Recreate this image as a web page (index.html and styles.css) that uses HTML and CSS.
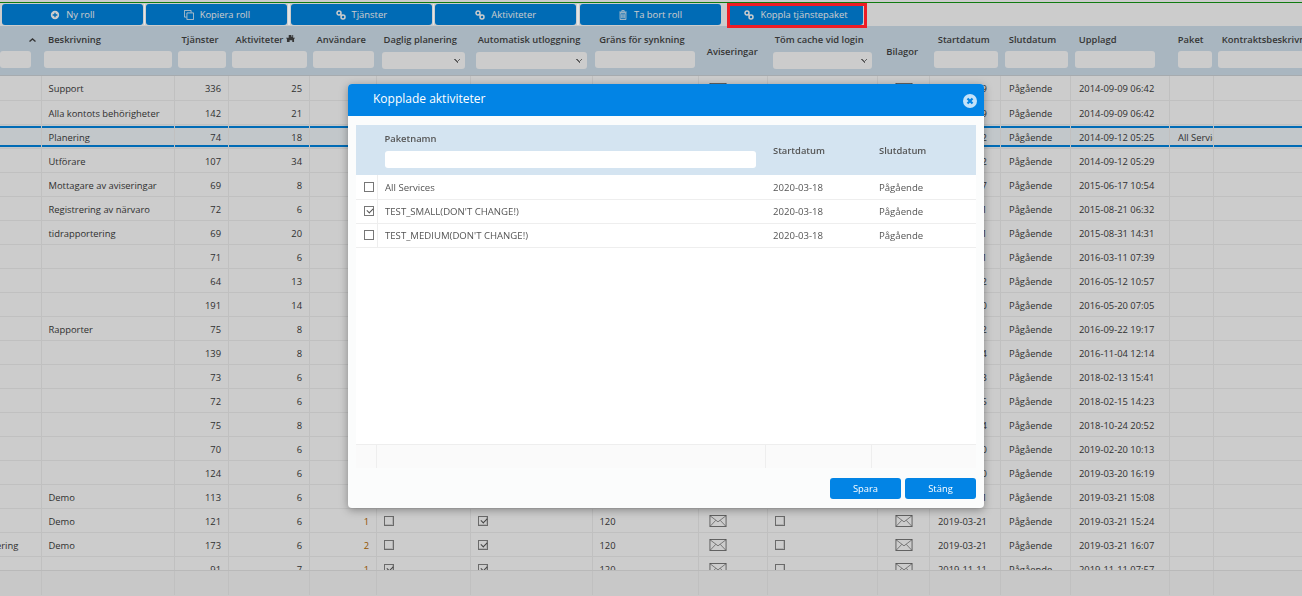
FILE: index.html
```html
<!DOCTYPE html>
<html lang="sv">
<head>
    <meta charset="UTF-8">
    <title>Roller</title>
    <link rel="stylesheet" href="styles.css">
</head>
<body>
    <svg class="defs" width="0" height="0">
        <symbol id="i-link" viewBox="0 0 12 12">
            <circle cx="3.6" cy="3.6" r="2.4" fill="none" stroke="currentColor" stroke-width="1.8"/>
            <circle cx="8.4" cy="8.4" r="2.4" fill="none" stroke="currentColor" stroke-width="1.8"/>
            <path d="M4.6 4.6l2.800 2.800" stroke="currentColor" stroke-width="1.800"/>
        </symbol>
        <symbol id="i-mail" viewBox="0 0 20 14">
            <rect x=".6" y=".6" width="18.8" height="12.8" fill="none" stroke="currentColor"/>
            <path d="M.6.8L10 8l9.4-7.2M.8 13.2l6.6-7M19.2 13.2l-6.6-7" fill="none" stroke="currentColor" stroke-width=".8"/>
        </symbol>
    </svg>

    <div class="toolbar">
        <button class="tool"><svg class="ico" viewBox="0 0 12 12"><circle cx="6" cy="6" r="5" fill="currentColor"/><path d="M6 3.2v5.600M3.2 6h5.600" stroke="#0086e3" stroke-width="1.6"/></svg>Ny roll</button>
        <span class="grip"></span>
        <button class="tool"><svg class="ico" viewBox="0 0 12 12"><path d="M3.5 3.5h8v8h-8zM3 8.5H.5v-8h8V3" fill="none" stroke="currentColor"/></svg>Kopiera roll</button>
        <span class="grip"></span>
        <button class="tool"><svg class="ico"><use href="#i-link"/></svg>Tjänster</button>
        <span class="grip"></span>
        <button class="tool"><svg class="ico"><use href="#i-link"/></svg>Aktiviteter</button>
        <span class="grip"></span>
        <button class="tool"><svg class="ico" viewBox="0 0 12 12"><path d="M4.5 2V.8h3V2M1.500 2.500h9M2.500 3.500h7v8h-7zM4.500 5v5M6 5v5M7.500 5v5" fill="none" stroke="currentColor"/></svg>Ta bort roll</button>
        <span class="grip"></span>
        <button class="tool last"><svg class="ico"><use href="#i-link"/></svg>Koppla tjänstepaket</button>
    </div>

    <div class="grid-head">
        <table class="grid">
            <colgroup><col class="c1"><col class="c2"><col class="c3"><col class="c4"><col class="c5"><col class="c6"><col class="c7"><col class="c8"><col class="c9"><col class="c10"><col class="c11"><col class="c12"><col class="c13"><col class="c14"><col class="c15"><col class="c16"></colgroup>
            <tr>
                <th><span class="sort"><svg viewBox="0 0 7 4" width="7" height="4"><path d="M.5 3.500l3-2.500 3 2.500" fill="none" stroke="currentColor" stroke-width="1.400"/></svg></span><div class="filter flush"></div></th>
                <th>Beskrivning<div class="filter"></div></th>
                <th>Tjänster<div class="filter"></div></th>
                <th>Aktiviteter <svg class="tree" viewBox="0 0 10 9"><path d="M3 0h3v2h1V0h1v3h2v1H9v4H7V6H4v2H1V4H0V3h3z" fill="currentColor"/></svg><div class="filter"></div></th>
                <th>Användare<div class="filter"></div></th>
                <th>Daglig planering<div class="filter pick"></div></th>
                <th>Automatisk utloggning<div class="filter pick"></div></th>
                <th>Gräns för synkning<div class="filter"></div></th>
                <th class="mid">Aviseringar</th>
                <th>Töm cache vid login<div class="filter pick"></div></th>
                <th class="mid">Bilagor</th>
                <th>Startdatum<div class="filter"></div></th>
                <th>Slutdatum<div class="filter"></div></th>
                <th>Upplagd<div class="filter upplagd"></div></th>
                <th>Paket<div class="filter paket"></div></th>
                <th>Kontraktsbeskrivning<div class="filter"></div></th>
            </tr>
        </table>
    </div>

    <div class="grid-body">
        <table class="grid" id="rows">
            <colgroup><col class="c1"><col class="c2"><col class="c3"><col class="c4"><col class="c5"><col class="c6"><col class="c7"><col class="c8"><col class="c9"><col class="c10"><col class="c11"><col class="c12"><col class="c13"><col class="c14"><col class="c15"><col class="c16"></colgroup>
        </table>
    </div>

    <div class="grid-foot">
        <table class="grid">
            <colgroup><col class="c1"><col class="c2"><col class="c3"><col class="c4"><col class="c5"><col class="c6"><col class="c7"><col class="c8"><col class="c9"><col class="c10"><col class="c11"><col class="c12"><col class="c13"><col class="c14"><col class="c15"><col class="c16"></colgroup>
            <tr><td></td><td></td><td></td><td></td><td></td><td></td><td></td><td></td><td></td><td></td><td></td><td></td><td></td><td></td><td></td><td></td></tr>
        </table>
    </div>

    <div class="overlay"></div>
    <div class="marker"></div>

    <div class="modal">
        <div class="modal-title">
            <span class="modal-name">Kopplade aktiviteter</span>
            <svg class="close" viewBox="0 0 14 14"><circle cx="7" cy="7" r="7" fill="#c4e2f9"/><path d="M4.500 4.500l5 5M9.500 4.500l-5 5" stroke="#0284e5" stroke-width="2.200"/></svg>
        </div>
        <div class="modal-body">
            <table class="pick-table">
                <colgroup><col class="p1"><col class="p2"><col class="p3"><col class="p4"></colgroup>
                <tr class="pick-head">
                    <th></th>
                    <th>Paketnamn<div class="filter white"></div></th>
                    <th class="mid">Startdatum</th>
                    <th class="mid">Slutdatum</th>
                </tr>
                <tr><td class="box"><span class="check"></span></td><td>All Services</td><td>2020-03-18</td><td>Pågående</td></tr>
                <tr><td class="box"><span class="check on"></span></td><td>TEST_SMALL(DON'T CHANGE!)</td><td>2020-03-18</td><td>Pågående</td></tr>
                <tr><td class="box"><span class="check"></span></td><td>TEST_MEDIUM(DON'T CHANGE!)</td><td>2020-03-18</td><td>Pågående</td></tr>
            </table>
            <div class="pick-space"></div>
            <div class="pick-foot"><span class="p1"></span><span class="p2"></span><span class="p3"></span><span class="p4"></span></div>
        </div>
        <div class="modal-actions">
            <button class="action">Spara</button>
            <button class="action">Stäng</button>
        </div>
    </div>

    <script src="rows.js"></script>
</body>
</html>
```

FILE: styles.css
```css
* {
    box-sizing: border-box;
}
html, body {
    height: 100%;
}
body {
    margin: 0;
    padding-top: 2px;
    overflow: hidden;
    background-color: #fff;
    color: #3c3c3c;
    font-family: "Open Sans", sans-serif;
    font-size: 9.4px;
}
.defs {
    display: block;
    height: 0;
}
.toolbar {
    display: flex;
    gap: 1px;
    height: 24px;
    padding: 1px 0 0 2px;
    border-top: 1px solid #149a14;
}
.tool {
    flex: none;
    width: 141px;
    height: 21px;
    border: none;
    border-radius: 3px;
    background-color: #0086e3;
    color: #fff;
    font: inherit;
    display: flex;
    align-items: center;
    justify-content: center;
    gap: 6px;
    padding: 0;
}
.tool.last {
    width: 135px;
    margin-left: 4.5px;
}
.tool .ico {
    width: 10px;
    height: 10px;
}
.grip {
    flex: none;
    width: 1.4px;
    height: 21px;
    background-color: #e4e4e4;
    z-index: 2;
}
.grip:last-of-type {
    visibility: hidden;
}
table.grid {
    table-layout: fixed;
    border-collapse: collapse;
    width: 1329px;
}
.c1 { width: 41px; }
.c2 { width: 133.5px; }
.c3 { width: 54px; }
.c4 { width: 81px; }
.c5 { width: 67px; }
.c6 { width: 94px; }
.c7 { width: 121.5px; }
.c8 { width: 106px; }
.c9 { width: 69.5px; }
.c10 { width: 110px; }
.c11 { width: 52px; }
.c12 { width: 71px; }
.c13 { width: 70px; }
.c14 { width: 99px; }
.c15 { width: 44px; }
.c16 { width: 115px; }
.grid-head {
    height: 50px;
    background-color: #d4e4f1;
    overflow: hidden;
    border-bottom: 1px solid #d0d6db;
}
.grid-head th {
    height: 50px;
    padding: 7px 7px 0;
    text-align: left;
    vertical-align: top;
    font-weight: 600;
    white-space: nowrap;
    overflow: hidden;
    color: #444;
}
.grid-head th.mid {
    vertical-align: middle;
    padding: 0 0 0 8.5px;
}
.grid-head th:nth-child(n+12) {
    padding-left: 8px;
}
.grid-head .sort {
    display: block;
    height: 13px;
    text-align: right;
    line-height: 11px;
    margin-right: -2px;
}
.tree {
    width: 9px;
    height: 8px;
}
.filter {
    height: 17px;
    margin: 5px -4px 0;
    border-radius: 3px;
    background-color: #fff;
}
.filter.flush {
    margin-left: -7px;
    margin-right: 3px;
}
.filter.upplagd {
    margin-right: 8px;
}
.filter.paket {
    margin-left: 0;
    margin-right: -5px;
}
.filter.pick {
    margin: 6px -1.5px 0;
    background-image: linear-gradient(45deg, transparent 50%, #777 50%, #777 64%, transparent 64%), linear-gradient(-45deg, transparent 50%, #777 50%, #777 64%, transparent 64%);
    background-size: 4px 4px;
    background-position: right 7px center, right 4px center;
    background-repeat: no-repeat;
}
.grid-body {
    height: 494px;
    overflow: hidden;
}
.grid-body td, .grid-foot td {
    height: 24px;
    padding: 2px 7px 0;
    border-right: 1px solid #f0f0f0;
    border-bottom: 1px solid #f0f0f0;
    white-space: nowrap;
    overflow: hidden;
}
.grid-body td:nth-child(n+12) {
    padding-left: 8px;
}
.grid-body td.num {
    text-align: right;
}
.grid-body td.users {
    color: #b86a00;
}
.grid-body td.scrolled {
    text-indent: -30px;
}
.grid-body tr.sel td {
    background-color: #f3f9fd;
    box-shadow: inset 0 1px #f3f9fd, inset 0 3px #0086e3, inset 0 -1px #f3f9fd, inset 0 -3px #0086e3;
}
.mail {
    display: block;
    width: 18px;
    height: 12px;
    margin: 0 0 0 3px;
    color: #666;
}
.mail.center {
    margin: 0 auto;
}
.check {
    display: block;
    width: 10px;
    height: 10px;
    border: 1px solid #858585;
    box-shadow: inset -1px -1px #ddd;
    position: relative;
}
.check.on::after {
    content: "";
    position: absolute;
    left: 1.5px;
    top: 0.5px;
    width: 5px;
    height: 3px;
    border-left: 1px solid #555;
    border-bottom: 1px solid #555;
    transform: rotate(-45deg);
}
.grid-foot {
    height: 26px;
    background-color: #fafafa;
    border-top: 1px solid #e8e8e8;
    overflow: hidden;
}
.grid-foot td {
    border-bottom: none;
}
.overlay {
    position: fixed;
    inset: 0;
    z-index: 1;
    background-color: rgba(0, 0, 0, 0.2);
}
.marker {
    position: absolute;
    left: 727px;
    top: 3px;
    z-index: 3;
    width: 140px;
    height: 25px;
    border: 3px solid #ee1c25;
}
.modal {
    position: absolute;
    left: 348px;
    top: 84px;
    z-index: 3;
    width: 636px;
    height: 424px;
    border-radius: 4px;
    background-color: #fbfcfc;
    box-shadow: 0 2px 8px rgba(0, 0, 0, 0.35);
    display: flex;
    flex-direction: column;
}
.modal-title {
    height: 32px;
    flex: none;
    border-radius: 4px 4px 0 0;
    background-color: #0284e5;
    color: #fff;
    font-size: 12px;
    display: flex;
    align-items: center;
    justify-content: space-between;
    padding: 0 7px 0 25px;
}
.modal-name {
    margin-top: -3px;
}
.close {
    width: 14px;
    height: 14px;
    margin-top: 2px;
}
.modal-body {
    flex: 1;
    margin: 9px 8px 0;
    background-color: #fff;
    display: flex;
    flex-direction: column;
}
.pick-table {
    table-layout: fixed;
    border-collapse: collapse;
    width: 620px;
}
.p1 { width: 21px; }
.p2 { width: 388.5px; }
.p3 { width: 106px; }
.p4 { width: 104.500px; }
.pick-head {
    background-color: #d4e4f1;
}
.pick-head th {
    height: 50px;
    padding: 7px 9.5px 0 7.5px;
    text-align: left;
    vertical-align: top;
    font-weight: 600;
    color: #555;
}
.pick-head th.mid {
    vertical-align: middle;
    padding-top: 0;
}
.filter.white {
    margin: 6px 0 0;
}
.pick-table td {
    height: 24px;
    padding: 1px 8px 0 7.5px;
    border-bottom: 1px solid #eee;
    color: #555;
    font-size: 9.6px;
}
.pick-table td.box {
    padding: 0 0 0 8px;
    border-right: 1px solid #eee;
}
.pick-table .check {
    border-color: #777;
    background-color: #fff;
    box-shadow: none;
}
.pick-space {
    flex: 1;
}
.pick-foot {
    height: 24px;
    display: flex;
    background-color: #fafafa;
    border-top: 1px solid #eee;
}
.pick-foot span {
    display: block;
    border-right: 1px solid #eee;
}
.pick-foot span:last-child {
    border-right: none;
}
.modal-actions {
    height: 40px;
    flex: none;
    display: flex;
    justify-content: flex-end;
    align-items: flex-start;
    gap: 4px;
    padding: 10px 8px 0 0;
}
.action {
    width: 71px;
    height: 21px;
    border: none;
    border-radius: 3px;
    background-color: #0284e5;
    color: #fff;
    font: inherit;
    padding: 0;
}
```

FILE: rows.js
```js
// första kolumnen, beskrivning, tjänster, aktiviteter, användare, daglig, auto, start, upplagd, paket
const data = [
    ['', 'Support', 336, 25, '', 0, 1, '2014-09-09', '2014-09-09 06:42', ''],
    ['', 'Alla kontots behörigheter', 142, 21, '', 0, 1, '2014-09-09', '2014-09-09 06:42', ''],
    ['', 'Planering', 74, 18, '', 0, 1, '2014-09-12', '2014-09-12 05:25', 'All Services'],
    ['', 'Utförare', 107, 34, '', 0, 1, '2014-09-12', '2014-09-12 05:29', ''],
    ['', 'Mottagare av aviseringar', 69, 8, '', 0, 1, '2015-06-17', '2015-06-17 10:54', ''],
    ['', 'Registrering av närvaro', 72, 6, '', 0, 1, '2015-08-21', '2015-08-21 06:32', ''],
    ['', 'tidrapportering', 69, 20, '', 0, 1, '2015-08-31', '2015-08-31 14:31', ''],
    ['', '', 71, 6, '', 0, 1, '2016-03-11', '2016-03-11 07:39', ''],
    ['', '', 64, 13, '', 0, 1, '2016-05-12', '2016-05-12 10:57', ''],
    ['', '', 191, 14, '', 0, 1, '2016-05-20', '2016-05-20 07:05', ''],
    ['', 'Rapporter', 75, 8, '', 0, 1, '2016-09-22', '2016-09-22 19:17', ''],
    ['', '', 139, 8, '', 0, 1, '2016-11-04', '2016-11-04 12:14', ''],
    ['', '', 73, 6, '', 0, 1, '2018-02-13', '2018-02-13 15:41', ''],
    ['', '', 72, 6, '', 0, 1, '2018-02-15', '2018-02-15 14:23', ''],
    ['', '', 75, 8, '', 0, 1, '2018-10-24', '2018-10-24 20:52', ''],
    ['', '', 70, 6, '', 0, 1, '2019-02-20', '2019-02-20 10:13', ''],
    ['', '', 124, 6, '', 0, 1, '2019-03-20', '2019-03-20 16:19', ''],
    ['', 'Demo', 113, 6, '', 0, 1, '2019-03-21', '2019-03-21 15:08', ''],
    ['', 'Demo', 121, 6, 1, 0, 1, '2019-03-21', '2019-03-21 15:24', ''],
    ['Planering', 'Demo', 173, 6, 2, 0, 1, '2019-03-21', '2019-03-21 16:07', ''],
    ['', '', 91, 7, 1, 1, 1, '2019-11-11', '2019-11-11 07:57', '']
];

const check = on => `<span class="check${on ? ' on' : ''}"></span>`;
const mail = cls => `<svg class="mail ${cls}"><use href="#i-mail"/></svg>`;

const table = document.getElementById('rows');
data.forEach((r, i) => {
    const tr = document.createElement('tr');
    if (i === 2) tr.className = 'sel';
    tr.innerHTML = `<td class="scrolled">${r[0]}</td><td>${r[1]}</td><td class="num">${r[2]}</td><td class="num">${r[3]}</td>
        <td class="num users">${r[4]}</td><td>${check(r[5])}</td><td>${check(r[6])}</td><td>120</td>
        <td>${mail('')}</td><td>${check(false)}</td><td>${mail('center')}</td><td>${r[7]}</td><td>Pågående</td><td>${r[8]}</td><td>${r[9]}</td><td></td>`;
    table.appendChild(tr);
});
```
